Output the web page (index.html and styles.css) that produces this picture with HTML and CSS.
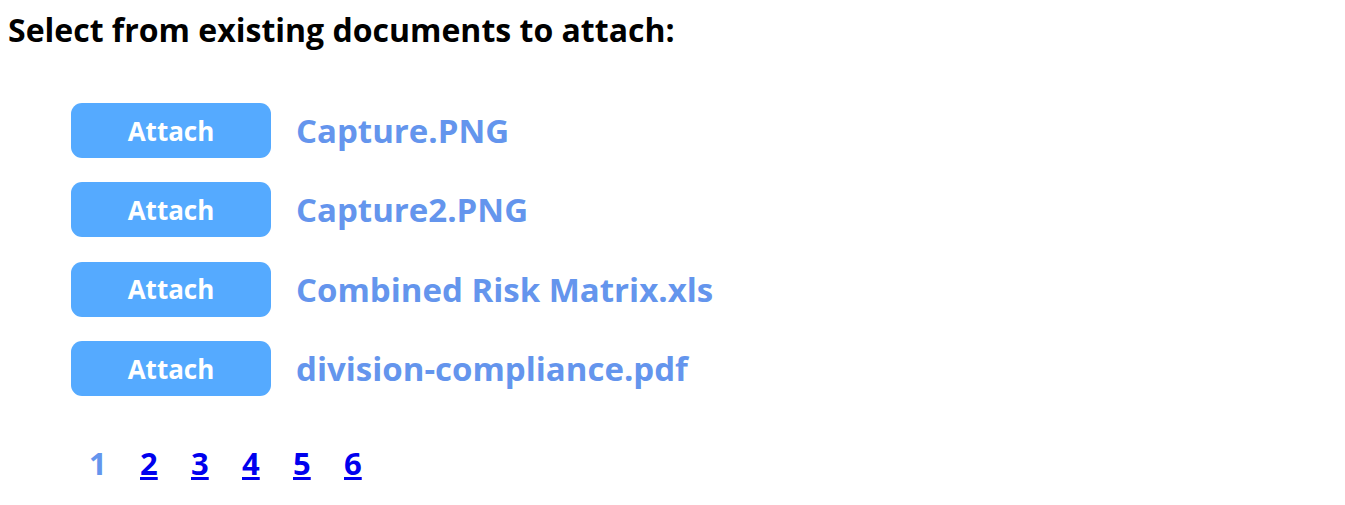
FILE: index.html
```html
<!DOCTYPE html>
<html>
<head>
<meta charset="utf-8">
<link rel="stylesheet" href="styles.css">
</head>
<body>
<h1 class="title">Select from existing documents to attach:</h1>
<ul class="docs">
  <li class="doc"><button class="attach">Attach</button><span class="name">Capture.PNG</span></li>
  <li class="doc"><button class="attach">Attach</button><span class="name">Capture2.PNG</span></li>
  <li class="doc"><button class="attach">Attach</button><span class="name">Combined Risk Matrix.xls</span></li>
  <li class="doc"><button class="attach">Attach</button><span class="name">division-compliance.pdf</span></li>
</ul>
<nav class="pager">
  <span class="current">1</span>
  <a href="#">2</a>
  <a href="#">3</a>
  <a href="#">4</a>
  <a href="#">5</a>
  <a href="#">6</a>
</nav>
</body>
</html>
```
FILE: styles.css
```css
body {
  margin: 8px;
  font-family: "Open Sans", Lato, sans-serif;
  font-weight: 700;
  background: #fff;
}
.title {
  margin: 3px 0 0 0;
  font-size: 32px;
  line-height: 38px;
  color: #000;
  font-weight: 700;
}
.docs {
  list-style: none;
  margin: 54px 0 0 0;
  padding: 0 0 0 63px;
  display: flex;
  flex-direction: column;
  gap: 24.35px;
}
.doc {
  display: flex;
  align-items: center;
  gap: 25px;
}
.attach {
  width: 200px;
  height: 55px;
  border: none;
  border-radius: 11px;
  background: #55aaff;
  color: #fff;
  font-family: "Open Sans", Lato, sans-serif;
  font-weight: 700;
  font-size: 26px;
  padding: 0;
}
.name {
  color: #6495ed;
  font-size: 33px;
}
.pager {
  display: flex;
  gap: 23px;
  margin: 48px 0 0 81px;
  font-size: 31px;
  line-height: 38px;
}
.pager .current {
  color: #6495ed;
  width: 28px;
}
.pager a {
  color: #0000ee;
  text-decoration: underline;
  text-decoration-thickness: 3px;
  width: 28px;
}
```
